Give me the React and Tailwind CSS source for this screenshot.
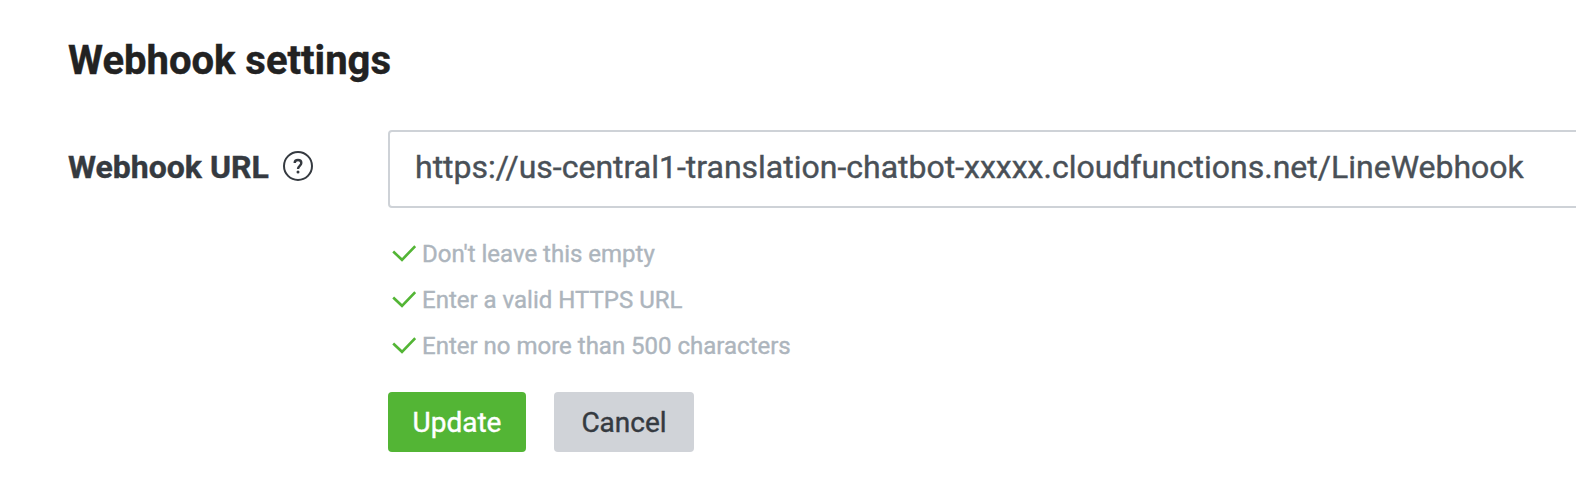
import { useState } from "react";

const RULES = [
  "Don't leave this empty",
  "Enter a valid HTTPS URL",
  "Enter no more than 500 characters",
];

function HelpIcon() {
  return (
    <svg width="32" height="32" viewBox="0 0 32 32" fill="none" stroke="#353a40" className="mb-[2px] shrink-0">
      <circle cx="16" cy="16" r="14" strokeWidth="2" />
      <path d="M12.7 13c0-1.9 1.3-3 3.3-3s3.3 1.1 3.3 2.9c0 1.4-.7 2-1.6 2.9-1.1 1-1.7 1.6-1.7 3.2" strokeWidth="2.4" />
      <circle cx="16" cy="22" r="1.5" fill="#353a40" stroke="none" />
    </svg>
  );
}

function CheckIcon() {
  return (
    <svg width="24" height="24" viewBox="0 0 24 24" fill="none" stroke="#53b535" strokeWidth="2.6" className="mb-[2px] shrink-0">
      <path d="M1.2 10.5 10 18.8 23.2 5.2" />
    </svg>
  );
}

export default function App() {
  const [url, setUrl] = useState(
    "https://us-central1-translation-chatbot-xxxxx.cloudfunctions.net/LineWebhook"
  );

  return (
    <div className="h-[484px] overflow-hidden bg-white pl-[68px] pt-[37px] font-['Roboto',sans-serif] [-webkit-text-stroke:0.4px]">
      <h2 className="text-[40px] leading-12 font-bold text-[#222222]">Webhook settings</h2>

      <div className="mt-[45px] flex items-start">
        {/* Label */}
        <div className="flex h-[74px] w-[320px] shrink-0 items-center gap-[13px]">
          <label htmlFor="webhook-url" className="text-[32px] leading-10 font-bold text-[#353a40]">
            Webhook URL
          </label>
          <HelpIcon />
        </div>

        {/* Field */}
        <div className="shrink-0">
          <input
            id="webhook-url"
            value={url}
            onChange={(e) => setUrl(e.target.value)}
            className="block h-[78px] w-[1240px] rounded border-2 border-[#ced2d7] bg-white pb-1 pl-[25px] text-[32px] text-[#495057] outline-none"
          />

          <ul className="mt-[23px] text-2xl text-[#adb5bd]">
            {RULES.map((rule) => (
              <li key={rule} className="flex h-[46px] items-center gap-[6px] pl-1">
                <CheckIcon />
                <span>{rule}</span>
              </li>
            ))}
          </ul>

          <div className="mt-[23px] flex gap-7 text-[28px]">
            <button className="h-[60px] w-[138px] rounded bg-[#53b535] pt-[2px] text-white">Update</button>
            <button className="h-[60px] w-[140px] rounded bg-[#d0d3d8] pt-[2px] text-[#353a40]">Cancel</button>
          </div>
        </div>
      </div>
    </div>
  );
}
